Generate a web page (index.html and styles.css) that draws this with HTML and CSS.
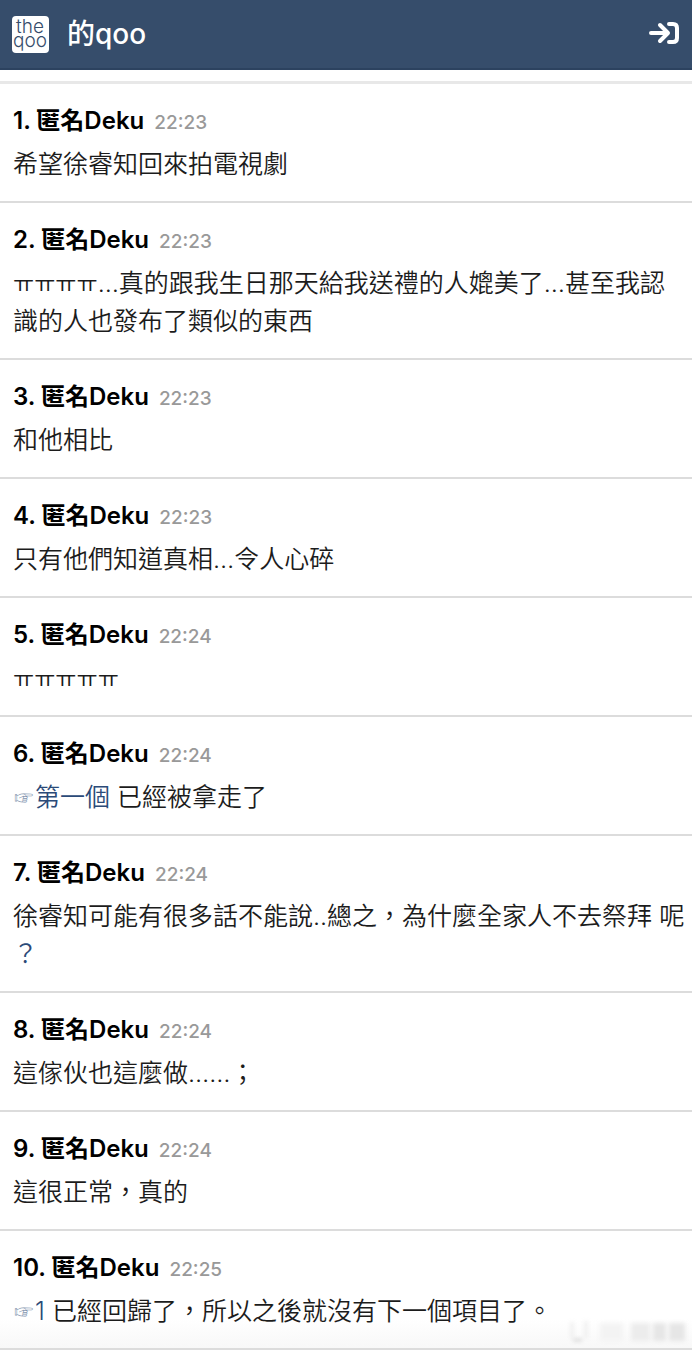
FILE: index.html
```html
<!DOCTYPE html>
<html lang="zh-Hant">
<head>
<meta charset="utf-8">
<meta name="viewport" content="width=device-width, initial-scale=1">
<title>的qoo</title>
<link rel="stylesheet" href="styles.css">
</head>
<body>
<header class="topbar">
  <a class="brand" href="#">
    <svg class="logo" viewBox="0 0 37 37" role="img" aria-label="theqoo">
      <rect width="37" height="37" rx="4" fill="#fff"/>
      <text class="logo-text"><tspan x="18" y="17">the</tspan><tspan x="18" y="31">qoo</tspan></text>
    </svg>
    <span class="brand-name">的qoo</span>
  </a>
  <button class="login" type="button" aria-label="登入">
    <svg viewBox="0 0 30 24" fill="none" stroke="#fff" stroke-width="4" stroke-linecap="round" stroke-linejoin="round">
      <path d="M2 11H18M11 3L19 11L11 19"/>
      <path d="M20 2H24Q28 2 28 6V16Q28 20 24 20H20"/>
    </svg>
  </button>
</header>
<main class="comments">
  <article class="comment">
    <h2 class="author">1. 匿名Deku <time>22:23</time></h2>
    <p class="text">希望徐睿知回來拍電視劇</p>
  </article>
  <article class="comment">
    <h2 class="author">2. 匿名Deku <time>22:23</time></h2>
    <p class="text"><span class="jamo">ㅠㅠㅠㅠ</span>…真的跟我生日那天給我送禮的人媲美了…甚至我認識的人也發布了類似的東西</p>
  </article>
  <article class="comment">
    <h2 class="author">3. 匿名Deku <time>22:23</time></h2>
    <p class="text">和他相比</p>
  </article>
  <article class="comment">
    <h2 class="author">4. 匿名Deku <time>22:23</time></h2>
    <p class="text">只有他們知道真相…令人心碎</p>
  </article>
  <article class="comment">
    <h2 class="author">5. 匿名Deku <time>22:24</time></h2>
    <p class="text"><span class="jamo">ㅠㅠㅠㅠㅠ</span></p>
  </article>
  <article class="comment">
    <h2 class="author">6. 匿名Deku <time>22:24</time></h2>
    <p class="text"><a href="#"><span class="hand">☞</span>第一個</a> 已經被拿走了</p>
  </article>
  <article class="comment">
    <h2 class="author">7. 匿名Deku <time>22:24</time></h2>
    <p class="text">徐睿知可能有很多話不能說..總之，為什麼全家人不去祭拜 呢<br><a href="#">？</a></p>
  </article>
  <article class="comment">
    <h2 class="author">8. 匿名Deku <time>22:24</time></h2>
    <p class="text">這傢伙也這麼做……；</p>
  </article>
  <article class="comment">
    <h2 class="author">9. 匿名Deku <time>22:24</time></h2>
    <p class="text">這很正常，真的</p>
  </article>
  <article class="comment last">
    <h2 class="author">10. 匿名Deku <time>22:25</time></h2>
    <p class="text"><a href="#"><span class="hand">☞</span>1</a> 已經回歸了，所以之後就沒有下一個項目了。</p>
    <svg class="smudge" viewBox="0 0 120 24" aria-hidden="true">
      <path d="M4 2V18M18 1V18" fill="none" stroke="#e4e4e4" stroke-width="2"/>
      <path d="M5 20H14" stroke="#999" stroke-width="1"/>
      <path d="M32 3H55V21H32Z" fill="#f3f3f3"/>
      <path d="M63 3H82V21H63Z" fill="#ececec"/>
      <path d="M85 3H98V21H85ZM101 3H117V21H101Z" fill="#e6e6e6"/>
    </svg>
  </article>
</main>
</body>
</html>
```
FILE: styles.css
```css
* {
  box-sizing: border-box;
}

body {
  margin: 0;
  background: #fff;
  color: #1c1c1c;
  font-family: Inter, "Noto Sans CJK TC", sans-serif;
  font-size: 25px;
}

a {
  color: #2b4a78;
  text-decoration: none;
}

.topbar {
  display: flex;
  align-items: center;
  justify-content: space-between;
  height: 70px;
  padding: 0 13px 0 12px;
  background: #364d6b;
  border-bottom: 2px solid #2c425f;
}

.brand {
  display: flex;
  align-items: center;
  gap: 18px;
  color: #fff;
}

.logo {
  width: 37px;
  height: 37px;
}

.logo-text {
  fill: #364d6b;
  font-family: Inter, sans-serif;
  font-size: 19px;
  font-weight: 300;
  text-anchor: middle;
}

.brand-name {
  font-size: 28px;
  font-weight: 500;
  line-height: 38px;
}

.login {
  display: flex;
  padding: 0;
  border: 0;
  background: none;
}

.login svg {
  width: 30px;
  height: 24px;
}

.comments {
  margin-top: 11px;
  border-top: 3px solid #e8e8e8;
}

.comment {
  padding: 18px 4px 18px 13px;
  border-bottom: 2px solid #dcdcdc;
}

.author {
  margin: 0 0 5px;
  color: #000;
  font-size: 24px;
  font-weight: 600;
  line-height: 38px;
}

.author time {
  margin-left: 4px;
  color: #999;
  font-size: 19px;
  font-weight: 500;
  line-height: 1;
}

.text {
  margin: 0;
  font-weight: 350;
  line-height: 38px;
}

.jamo {
  font-size: 23px;
  line-height: 1;
}

.hand {
  color: #8496b0;
  font-family: "DejaVu Sans", sans-serif;
  font-size: 22px;
  line-height: 1;
}

.last {
  position: relative;
  background: linear-gradient(#fff 75%, #f8f8f8);
}

.smudge {
  position: absolute;
  right: 4px;
  bottom: 4px;
  width: 120px;
  height: 24px;
  filter: blur(2px);
}
```
